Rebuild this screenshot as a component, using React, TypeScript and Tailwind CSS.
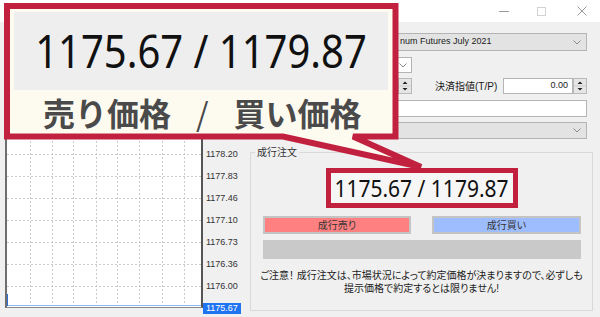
import React from 'react';

const gridX = [23, 45, 66, 89, 110, 132, 155, 177];
const gridY = [19, 41, 63, 85, 107, 129, 151, 173, 195, 217, 239, 261];
const axisLabels = ['1178.20', '1177.83', '1177.46', '1177.10', '1176.73', '1176.36', '1176.00'];

function Chevron() {
  return (
    <svg width="8" height="5" viewBox="0 0 8 5" className="block">
      <path d="M0.5 0.5L4 4L7.5 0.5" fill="none" stroke="#8a8a8a" />
    </svg>
  );
}

function Spinner() {
  return (
    <svg width="14" height="16" viewBox="0 0 14 16" className="block shrink-0">
      <rect x="0.5" y="0.5" width="13" height="15" fill="#e6e6e6" stroke="#b9b9b9" />
      <line x1="1" x2="13" y1="8" y2="8" stroke="#cfcfcf" />
      <path d="M4.5 6L7 3.5L9.5 6Z" fill="#222" />
      <path d="M4.5 10L7 12.5L9.5 10Z" fill="#222" />
    </svg>
  );
}

function TitleBar() {
  return (
    <div className="flex h-[22px] items-center justify-end bg-white pr-[13px]">
      <div className="h-px w-[10px] bg-[#9a9a9a]" />
      <div className="ml-[28px] h-[9px] w-[9px] border border-[#d2d2d2]" />
      <svg className="ml-[31px] block" width="10" height="10" viewBox="0 0 10 10">
        <path d="M0.5 0.5L9.5 9.5M9.5 0.5L0.5 9.5" stroke="#9a9a9a" />
      </svg>
    </div>
  );
}

function ChartPane() {
  return (
    <div className="flex pl-[5px] pt-[3px]">
      <div className="h-[283px] w-[198px] border-b border-l-2 border-r-2 border-b-[#8a8a8a] border-l-[#6e6e6e] border-r-[#555] bg-white">
        <svg width="194" height="282" className="block">
          {gridY.map((y) => (
            <line key={y} x1="0" x2="194" y1={y + 0.5} y2={y + 0.5} stroke="#cacaca" strokeDasharray="2 2" />
          ))}
          {gridX.map((x) => (
            <line key={x} x1={x + 0.5} x2={x + 0.5} y1="0" y2="281" stroke="#cacaca" strokeDasharray="2 2" />
          ))}
          <line x1="0" x2="194" y1="280.5" y2="280.5" stroke="#8fb8f0" />
          <line x1="0.5" x2="0.5" y1="269" y2="281" stroke="#2f6fd8" />
        </svg>
      </div>
      {/* labels above 1178.20 sit under the callout */}
      <div className="w-[44px] pt-[119px] text-[9px] text-[#333]">
        {axisLabels.map((l) => (
          <div key={l} className="flex h-[22px] items-center pl-[3px]">
            {l}
          </div>
        ))}
        <div className="mt-[5px] flex h-[11px] w-[38px] items-center bg-[#1f74f2] pl-[3px] text-white">1175.67</div>
      </div>
    </div>
  );
}

function OrderPane() {
  return (
    <div className="flex flex-1 flex-col pt-[11px] text-[9px] text-[#1a1a1a]">
      <div className="ml-[150px] flex h-[18px] w-[190px] items-center justify-between border border-[#b4b4b4] bg-[#e3e3e3] pl-[2px] pr-[5px]">
        <span>num Futures July 2021</span>
        <Chevron />
      </div>
      <div className="ml-[105px] mt-[6px] flex h-[16px] w-[60px] items-center justify-end border border-[#b4b4b4] bg-white pr-[4px]">
        <Chevron />
      </div>
      <div className="mt-[5px] flex h-[16px] items-center">
        <div className="ml-[93px] h-[16px] w-[58px] border border-[#b4b4b4] bg-white" />
        <Spinner />
        <div className="ml-[23px] w-[66px] text-[10px] [font-feature-settings:'palt']">決済指値(T/P)</div>
        <div className="ml-[2px] flex h-[16px] w-[70px] items-center justify-end border border-[#b4b4b4] bg-white pr-[4px]">
          0.00
        </div>
        <Spinner />
      </div>
      <div className="ml-[93px] mt-[6px] h-[17px] w-[247px] border border-[#b4b4b4] bg-white" />
      <div className="ml-[93px] mt-[5px] flex h-[17px] w-[247px] items-center justify-end border border-[#b4b4b4] bg-[#e3e3e3] pr-[5px]">
        <Chevron />
      </div>

      <fieldset className="ml-[3px] mt-[7px] h-[165px] w-[343px] border border-[#d9d9d9] text-[10px] [font-feature-settings:'palt']">
        <legend className="ml-[4px] px-[2px] leading-[13px] text-[#333]">成行注文</legend>
        <div className="flex flex-col items-center">
          <div className="mt-[9px] flex h-[40px] w-[192px] items-center justify-center border-[5px] border-[#c1203f] bg-[#f6f6f6]">
            <div className="scale-y-[1.08] font-['Noto_Sans',sans-serif] text-[21px] leading-none text-[#111]">
              1175.67 / 1179.87
            </div>
          </div>
          <div className="mt-[8px] flex w-full justify-between px-[12px]">
            <div className="flex h-[18px] w-[148px] items-center justify-center border-2 border-[#c4c4c4] bg-[#ff8080] text-[#333]">
              成行売り
            </div>
            <div className="mr-[-1px] flex h-[18px] w-[149px] items-center justify-center border-2 border-[#c4c4c4] bg-[#9dbdff] text-[#333]">
              成行買い
            </div>
          </div>
          <div className="mt-[6px] h-[19px] w-[318px] bg-[#c9c9c9]" />
          <div className="mt-[10px] text-center leading-[13px] text-[#222]">
            ご注意！ 成行注文は、市場状況によって約定価格が決まりますので、必ずしも
            <br />
            提示価格で約定するとは限りません!
          </div>
        </div>
      </fieldset>
    </div>
  );
}

function Callout() {
  return (
    <>
      <svg className="absolute left-0 top-0 block" width="600" height="317">
        <path
          d="M7 6H395.5V136.5H353L421 167L283 136.5H7Z"
          fill="#fdfaf0"
          stroke="#c1203f"
          strokeWidth="6"
        />
      </svg>
      <div className="absolute left-[14px] top-[12px] w-[374px]">
        <div className="flex h-[78px] items-center justify-center bg-[#eeeeee]">
          <div className="scale-y-[1.12] font-['Noto_Sans',sans-serif] text-[40px] leading-none text-[#111]">
            1175.67 / 1179.87
          </div>
        </div>
        <div className="flex h-[43px] items-center pl-[29px] font-['Noto_Sans_CJK_JP',sans-serif] text-[32px] font-semibold leading-none text-[#4a4a4a]">
          <span>売り価格</span>
          <span className="mx-[25px] font-normal">/</span>
          <span>買い価格</span>
        </div>
      </div>
    </>
  );
}

export default function App() {
  return (
    <div className="relative h-[317px] w-[600px] overflow-hidden bg-[#f0f0f0] font-['Liberation_Sans','Noto_Sans_CJK_JP',sans-serif]">
      <TitleBar />
      <div className="flex h-[295px]">
        <ChartPane />
        <OrderPane />
      </div>
      <Callout />
    </div>
  );
}
